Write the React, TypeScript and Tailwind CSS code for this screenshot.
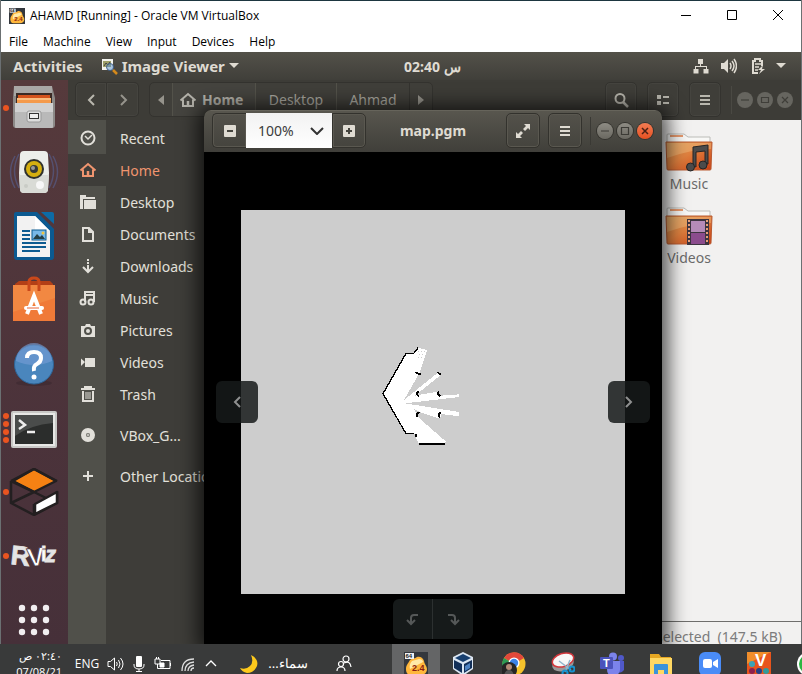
import React from "react";

const ui = "font-['Noto_Sans','Open_Sans',sans-serif]";
const win = "font-['Open_Sans','Noto_Sans',sans-serif]";
const toolBtn =
  "flex h-[35px] w-8 shrink-0 items-center justify-center rounded-[5px] border border-[#34332f] bg-[#3f3e39] shadow-[inset_0_0_0_1px_#45443f] text-[#b9b7ae]";
const viewerBtn =
  "flex h-[35px] w-[34px] shrink-0 items-center justify-center rounded-[5px] border border-[#33322d] bg-gradient-to-b from-[#53514a] to-[#45443e] shadow-[inset_0_0_0_1px_#5a5850] text-[#dfdbd2]";

function Hamburger() {
  return (
    <svg width="16" height="16" viewBox="0 0 16 16" fill="currentColor">
      <path d="M3 3h10v2H3zM3 7h10v2H3zM3 11h10v2H3z" />
    </svg>
  );
}

function HomeIcon() {
  return (
    <svg width="18" height="18" viewBox="0 0 18 18" fill="none" stroke="currentColor" strokeWidth="2">
      <path d="M1.500 9.500 9 3l7.500 6.500M4 8.500V15h10V8.500" />
      <path d="M9 10v5" strokeWidth="2.500" />
    </svg>
  );
}

/* ---------- host window ---------- */

function EmulatorIcon({ size }: { size: number }) {
  return (
    <svg width={size} height={size} viewBox="0 0 24 24">
      <rect width="24" height="24" fill="#33373d" />
      <path d="M6 8c2-2 5-1 7-3 2-1 6 0 7 4 0 3 3 5 3 8 0 4-3 6-7 6H7c-4 0-5-3-5-6 0-4 2-5 4-9z" fill="#ffb73c" />
      <path d="M8 9c2-1 5-1 7-2 2 0 4 1 4 3L6 17c-1-3 0-6 2-8z" fill="#ffe9a8" />
      <rect x="1" y="1" width="9" height="6" fill="#eef1f4" />
      <text x="1.500" y="6" fontSize="6" fontWeight="700" fill="#222" fontFamily="Liberation Sans">64</text>
      <text x="8" y="19" fontSize="9" fontWeight="700" fill="#8b1d10" fontFamily="Liberation Sans">2.4</text>
    </svg>
  );
}

function TitleBar() {
  return (
    <header className="flex h-[31px] shrink-0 items-center border-t border-[#1d3640] bg-white pl-2 text-black">
      <EmulatorIcon size={16} />
      <h1 className="ml-[5px] flex-1 text-[12px] whitespace-nowrap">AHAMD [Running] - Oracle VM VirtualBox</h1>
      <button aria-label="Minimize" className="flex h-full w-[46px] items-center justify-center">
        <svg width="12" height="12" viewBox="0 0 12 12"><path d="M1 5.500h10" stroke="#000" /></svg>
      </button>
      <button aria-label="Maximize" className="flex h-full w-[46px] items-center justify-center">
        <svg width="12" height="12" viewBox="0 0 12 12"><path d="M1.500 0.500h9v9h-9z" fill="none" stroke="#000" /></svg>
      </button>
      <button aria-label="Close" className="flex h-full w-[46px] items-center justify-center">
        <svg width="12" height="12" viewBox="0 0 12 12"><path d="m1 0 10 10M11 0 1 10" stroke="#000" /></svg>
      </button>
    </header>
  );
}

function MenuBar() {
  return (
    <nav className="flex h-[21px] shrink-0 items-center gap-[15px] bg-white pl-2 text-[12px] text-black">
      {["File", "Machine", "View", "Input", "Devices", "Help"].map((m) => (
        <button key={m}>{m}</button>
      ))}
    </nav>
  );
}

/* ---------- guest desktop ---------- */

function TopPanel() {
  return (
    <div className="flex h-7 shrink-0 items-center bg-gradient-to-b from-[#535149] to-[#403f3a] font-bold text-[#dfdbd2]">
      <div className="flex w-1/2 items-center pl-3 text-[15px]">
        <button>Activities</button>
        <button className="ml-[18px] flex items-center">
          <svg width="17" height="17" viewBox="0 0 17 17" className="mr-1">
            <rect x="1" y="1" width="11" height="11" fill="#f3f3ee" />
            <rect x="2" y="3" width="8" height="6" fill="#9d9f69" />
            <path d="m3 8 2-3 2 2 2-3" stroke="#444" fill="none" />
            <circle cx="9" cy="9" r="3.500" fill="#4f8fd0" fillOpacity=".45" stroke="#46638a" />
            <path d="m12 12 4 4" stroke="#d58a1c" strokeWidth="2.500" />
          </svg>
          Image Viewer
          <svg width="10" height="6" viewBox="0 0 10 6" className="ml-1" fill="currentColor"><path d="M0 0h10L5 5z" /></svg>
        </button>
      </div>
      <time dir="ltr" className="pl-[3px] text-[14px] whitespace-nowrap">02:40 {"\u200e"}س</time>
      <div className="flex flex-1 items-center justify-end pr-[15px]">
        <svg width="16" height="16" viewBox="0 0 16 16" fill="currentColor">
          <path d="M5 1h5v5H8v2h6v3h1.500v4.500h-5V11H13V9H3v2h2.500v4.500h-5V11H2V8h5V6H5z" />
        </svg>
        <svg width="16" height="16" viewBox="0 0 16 16" className="ml-3" fill="currentColor">
          <path d="M0 5h3l4-4v14l-4-4H0z" />
          <path d="M9 5q2 3 0 6M11 3q4 5 0 10M13 1q5 7 0 14" fill="none" stroke="currentColor" strokeWidth="1.500" />
        </svg>
        <svg width="15" height="16" viewBox="0 0 15 16" className="ml-[14px]" fill="none" stroke="currentColor" strokeWidth="2">
          <path d="M7 15H2V3h2V1h5v2h2v5" />
          <path d="M4 6h6M4 9h4M4 12h3" strokeWidth="1.500" />
          <path d="m12 7-5 5h3l-2 4 6-5h-3z" fill="currentColor" stroke="none" />
        </svg>
        <svg width="10" height="6" viewBox="0 0 10 6" className="ml-[10px]" fill="currentColor"><path d="M0 0h10L5 5z" /></svg>
      </div>
    </div>
  );
}

const dock: { name: string; dots: number; art: React.ReactNode }[] = [
  {
    name: "Files", dots: 1,
    art: (
      <>
        <path d="M4 2h38l3 12v27q0 3-3 3H6q-3 0-3-3V14z" fill="#8c8a88" />
        <path d="M4 2h38v10H4z" fill="#a9a7a5" />
        <path d="M6 9h36v12H6z" fill="#3b2a25" />
        <path d="M8 11h32v10H8z" fill="#d4531d" /><path d="M7 14h34v7H7z" fill="#f49a4b" />
        <path d="M7 15h34" stroke="#ffe0b5" />
        <path d="M5 19h38v24q0 1-1 1H6q-1 0-1-1z" fill="#b9b9b9" /><path d="M5 19h38v9H5z" fill="#d1d1d1" />
        <rect x="17" y="27" width="14" height="11" rx="2" fill="#ddd" stroke="#999" />
        <rect x="19.500" y="29.500" width="9" height="5" fill="#eee" stroke="#333" />
      </>
    ),
  },
  {
    name: "Rhythmbox", dots: 0,
    art: (
      <>
        <path d="M5 8q-9 16 0 32M9 6q-9 17 0 34M43 8q9 16 0 32M39 6q9 17 0 34" fill="none" stroke="#55506f" strokeWidth="1.500" />
        <path d="M14 3h20q4 0 4 4l1 18-1 16q0 4-4 4H14q-4 0-4-4L9 25l1-18q0-4 4-4z" fill="#eceeea" />
        <path d="M9 27h30l-1 14q0 4-4 4H14q-4 0-4-4z" fill="#d9dbd6" />
        <circle cx="24" cy="21" r="10" fill="#2f312d" /><circle cx="24" cy="21" r="8" fill="#d5af10" />
        <circle cx="24" cy="21" r="4" fill="#373a38" /><circle cx="23" cy="20" r="2" fill="#999" />
        <ellipse cx="30" cy="37" rx="4" ry="4" fill="#f7f7f7" /><circle cx="16" cy="38" r="2" fill="#c9cbc6" />
      </>
    ),
  },
  {
    name: "LibreOffice Writer", dots: 0,
    art: (
      <>
        <path d="M6 0h21l17 17v28q0 3-3 3H7q-3 0-3-3V2q0-2 2-2z" fill="#0b5a91" />
        <path d="M31 0h11q2 0 2 2v10z" fill="#0d6ba6" />
        <path d="M7 4h18l15 15v26H7z" fill="#f2f2f2" /><path d="M25 4l15 15H25z" fill="#fff" />
        <path d="M12 19h8M12 23h8M12 27h8M12 31h24M12 35h24M12 39h18" stroke="#0d5c91" strokeWidth="2" />
        <rect x="22" y="18" width="14" height="10" fill="#77b8e8" stroke="#0d5c91" />
        <path d="m23 27 4-5 3 3 2-2 3 4z" fill="#243f45" /><circle cx="33" cy="21" r="1.500" fill="#f0c541" />
      </>
    ),
  },
  {
    name: "Ubuntu Software", dots: 0,
    art: (
      <>
        <path d="M5 8l4-3h31l3 3v5H5z" fill="#b33f16" />
        <path d="M3 9h42v36H3z" fill="#f07a38" /><path d="M3 9h42v13L3 36z" fill="#f39149" fillOpacity=".6" />
        <path d="M19 15V6q0-4 5-4t5 4v9" fill="none" stroke="#c9481a" strokeWidth="3" />
        <path d="M17 38 24 20l7 18" fill="none" stroke="#fff" strokeWidth="4" />
        <path d="M16 32h16" stroke="#fff" strokeWidth="4" strokeLinecap="round" /><path d="M17 32h12" stroke="#eb6536" />
      </>
    ),
  },
  {
    name: "Help", dots: 0,
    art: (
      <>
        <ellipse cx="24" cy="43" rx="18" ry="3" fill="#2b1d24" fillOpacity=".3" />
        <circle cx="24" cy="24.500" r="19.500" fill="#4a86bd" stroke="#2d6598" />
        <path d="M6 21a18 18 0 0 1 36 0q-18 8-36 0z" fill="#789ed5" fillOpacity=".6" />
        <path d="M17 18q0-6 7-6t7 6q0 4-4 6t-3 7" fill="none" stroke="#fff" strokeWidth="4" />
        <circle cx="24" cy="37" r="2.500" fill="#fff" />
      </>
    ),
  },
  {
    name: "Terminal", dots: 4,
    art: (
      <>
        <rect x="1" y="7" width="46" height="37" rx="2" fill="#c9c9c7" />
        <rect x="3" y="9" width="42" height="33" fill="#e8e8e6" />
        <rect x="5" y="11" width="38" height="29" fill="#2b2d2c" />
        <path d="M5 11h38v8Q20 21 5 32z" fill="#4a4c4b" />
        <path d="m9 16 6 5-6 4M17 28h8" fill="none" stroke="#eee" strokeWidth="2.500" />
      </>
    ),
  },
  {
    name: "Gazebo", dots: 1,
    art: (
      <g stroke="#231f20" strokeWidth="2.500" strokeLinejoin="round">
        <path d="M24 1 46 13 24 24 3 13z" fill="#f58113" />
        <path d="M1 13 24 1l23 12M1 13v22l23 12 23-12V23M1 13l23 11M1 35l23-11 12 6M24 47V36" fill="none" />
        <path d="m25 36 22-12v11L25 46z" fill="#fff" />
      </g>
    ),
  },
  {
    name: "RViz", dots: 1,
    art: (
      <g fontFamily="Liberation Sans" fontWeight="700" fill="#e4e4e4" stroke="#e4e4e4" strokeWidth=".8">
        <text x="1" y="33" fontSize="27" transform="rotate(6 10 24)">R</text>
        <text x="17" y="34" fontSize="26" transform="rotate(-6 24 24)" fill="#fff" stroke="#4a333c">V</text>
        <text x="31" y="29" fontSize="20" fill="#fff">i</text>
        <text x="35" y="30" fontSize="22" fontStyle="italic">z</text>
      </g>
    ),
  },
  {
    name: "Show Applications", dots: 0,
    art: <>{[12, 24, 36].map((y) => [12, 24, 36].map((x) => <circle key={`${x}-${y}`} cx={x} cy={y} r="3.200" fill="#f1eef0" />))}</>,
  },
];

function Dock() {
  return (
    <aside className="flex w-[67px] shrink-0 flex-col gap-2 overflow-hidden bg-gradient-to-b from-[#563a3c] via-[#4d343b] to-[#463039]">
      {dock.map((d) => (
        <button key={d.name} aria-label={d.name} className="flex h-14 shrink-0 items-center">
          <span className="flex w-2 flex-col items-end gap-[2px]">
            {Array.from({ length: d.dots }, (_, i) => (
              <span key={i} className="size-[6px] rounded-full bg-[#ea5420]" />
            ))}
          </span>
          <svg width="50" height="48" viewBox="-1 0 50 48">{d.art}</svg>
        </button>
      ))}
    </aside>
  );
}

const places: { label: string; icon: React.ReactNode; gap?: boolean }[] = [
  { label: "Recent", icon: <><circle cx="9" cy="9" r="6.500" /><path d="m6 7 3 3 4-4" strokeWidth="1.500" /></> },
  { label: "Home", icon: null },
  { label: "Desktop", icon: <><path d="M1 2h6v2h9v2H4v10H1z" fill="currentColor" stroke="none" /><path d="M5 7h12v9H5z" fill="currentColor" stroke="none" /></> },
  { label: "Documents", icon: <path d="M4 3h6l4 4v9H4zM10 3v4h4" /> },
  { label: "Downloads", icon: <path d="M9 2v2M9 5v2M9 8v6M4 10l5 5 5-5" /> },
  { label: "Music", icon: <><circle cx="4" cy="13" r="2.500" /><circle cx="12" cy="13" r="2.500" /><path d="M6 13V3h9v10M6 6h9" /></> },
  { label: "Pictures", icon: <><path d="M2 5h4l1-2h4l1 2h4v11H2z" fill="currentColor" stroke="none" /><circle cx="9" cy="10" r="3" stroke="#50504a" /></> },
  { label: "Videos", icon: <path d="M2 5.500 6 9l-4 4zM6 5h10v9H6z" fill="currentColor" stroke="none" /> },
  { label: "Trash", icon: <><path d="M2 4h14M6 4V2h6v2M4 6v10h10V6" /><path d="M7 7v7M9 7v7M11 7v7" strokeWidth="1" /></> },
  { label: "VBox_G...", gap: true, icon: <><circle cx="9" cy="9" r="4.500" strokeWidth="5" /><circle cx="9" cy="9" r="1" strokeWidth="1" /></> },
  { label: "Other Locations", gap: true, icon: <path d="M9 4v10M4 9h10" /> },
];

function Sidebar() {
  return (
    <nav className="flex w-[190px] shrink-0 flex-col bg-[linear-gradient(to_right,#50504a_38px,#3e3d39_38px)] pt-[2px]">
      {places.map((p) => (
        <a
          key={p.label}
          href="#"
          className={`flex h-8 shrink-0 items-center text-[14px] ${p.gap ? "mt-[9px]" : ""} ${p.label === "Home" ? "bg-[#3e3d39] text-[#f0956f]" : "text-[#e2e0da]"}`}
        >
          <span className="flex w-10 shrink-0 items-center justify-center">
            {p.icon ? (
              <svg width="18" height="18" viewBox="0 0 18 18" fill="none" stroke="currentColor" strokeWidth="2">{p.icon}</svg>
            ) : (
              <HomeIcon />
            )}
          </span>
          <span className="pl-3 whitespace-nowrap">{p.label}</span>
        </a>
      ))}
    </nav>
  );
}

function Folder({ kind }: { kind: string }) {
  return (
    <button className="flex h-[74px] w-24 flex-col items-center text-[14px] leading-5 text-[#6a6a6a]">
      <svg width="48" height="42" viewBox="0 -1 48 42">
        <defs>
          <linearGradient id={`f${kind}`} x1="0" y1="0" x2="1" y2="1">
            <stop offset="0" stopColor="#d99b58" /><stop offset=".45" stopColor="#e0813f" /><stop offset="1" stopColor="#c93d12" />
          </linearGradient>
        </defs>
        <path d="M2 10V2q0-1 1-1h16l4 3h22v8z" fill="#f8f8f6" stroke="#bcbcb8" />
        <path d="M5 3h13" stroke="#e79a6e" strokeWidth="2" />
        <path d="M1 9h46l-1 27q0 1-1 1H3q-1 0-1-1z" fill={`url(#f${kind})`} stroke="#b95c33" />
        <path d="M2 10h44v6Q28 16 2 25z" fill="#f6ce93" fillOpacity=".35" />
        {kind === "Music" ? (
          <g fill="#4b4b4b" stroke="#252525">
            <path d="M28 33V14l15-2v19h-3V18l-9 1v15z" />
            <circle cx="25.500" cy="34" r="4" /><circle cx="38" cy="32" r="4" />
          </g>
        ) : (
          <>
            <path d="M22 12h22v26H22z" fill="#3d3540" />
            <path d="M26 14h14v11H26z" fill="#b58bb8" /><path d="M26 26h14v11H26z" fill="#8b4c8d" />
            <path d="M24 13v24M42 13v24" stroke="#e8a07a" strokeWidth="2" strokeDasharray="2 2" />
          </>
        )}
      </svg>
      {kind}
    </button>
  );
}

function FileManager() {
  return (
    <section className="flex min-w-0 flex-1 flex-col bg-[#f2f1f0]">
      <div className="flex h-10 shrink-0 items-center bg-[#3d3c37] pr-2 pb-px pl-[7px] text-[14px] text-[#a9a79f]">
        <button aria-label="Back" className={`${toolBtn} rounded-r-none`}>
          <svg width="16" height="16" viewBox="0 0 16 16" fill="none" stroke="currentColor" strokeWidth="2"><path d="m11 3-5 5 5 5" /></svg>
        </button>
        <button aria-label="Forward" className={`${toolBtn} rounded-l-none border-l-0`}>
          <svg width="16" height="16" viewBox="0 0 16 16" fill="none" stroke="#96948c" strokeWidth="2"><path d="m6 3 5 5-5 5" /></svg>
        </button>
        <div className="ml-[10px] flex h-[35px] items-stretch rounded-[5px] border border-[#34332f] bg-[#403f3a]">
          <button aria-label="Scroll path left" className="flex w-[22px] items-center justify-center">
            <svg width="6" height="10" viewBox="0 0 6 10" fill="#96948c"><path d="M6 0v10L0 5z" /></svg>
          </button>
          <button className="flex w-[84px] items-center gap-[5px] border-x border-[#53524a] bg-[#45443f] pl-[6px] font-bold text-[#b4b2aa]">
            <HomeIcon />Home
          </button>
          <button className="w-[81px] border-r border-[#53524a]">Desktop</button>
          <button className="w-[73px] border-r border-[#34332f]">Ahmad</button>
          <button aria-label="Scroll path right" className="flex w-[22px] items-center justify-center">
            <svg width="6" height="10" viewBox="0 0 6 10" fill="#96948c"><path d="M0 0v10l6-5z" /></svg>
          </button>
        </div>
        <div className="flex-1" />
        <div className="flex items-center gap-[10px]">
          <button aria-label="Search" className={toolBtn}>
            <svg width="16" height="16" viewBox="0 0 16 16" fill="none" stroke="currentColor" strokeWidth="2"><circle cx="7" cy="6.500" r="4.500" /><path d="m10 10 5 5" strokeWidth="2.500" /></svg>
          </button>
          <button aria-label="List view" className={toolBtn}>
            <svg width="16" height="16" viewBox="0 0 16 16" fill="currentColor"><path d="M2 3h4v4H2zM2 9h4v4H2zM8 4h6v2H8zM8 10h6v2H8z" /></svg>
          </button>
          <button aria-label="Menu" className={toolBtn}><Hamburger /></button>
        </div>
        <span className="ml-[10px] h-7 w-px bg-[#4a4943]" />
        <div className="ml-[5px] flex gap-1">
          {["M4 8h8", "M4.500 5.500h7v5h-7z", "m5 5 6 6M11 5l-6 6"].map((d, i) => (
            <button key={d} aria-label={["Minimize", "Maximize", "Close"][i]} className="size-4 rounded-full bg-[#66655f]">
              <svg width="16" height="16" viewBox="0 0 16 16" fill="none" stroke="#3f3e39" strokeWidth="1.200"><path d={d} /></svg>
            </button>
          ))}
        </div>
      </div>
      <div className="flex min-h-0 flex-1">
        <Sidebar />
        <div className="flex min-w-0 flex-1 flex-col">
          <div className="flex flex-1 flex-col items-end pt-3 pr-16">
            <Folder kind="Music" />
            <Folder kind="Videos" />
          </div>
          <div className="flex h-[23px] justify-end border-t border-[#6f6e6c] pt-[5px] pr-[19px] text-[14px] leading-5 whitespace-nowrap text-[#7c7c7c]">
            “map.pgm” selected&nbsp; (147.5 kB)
          </div>
        </div>
      </div>
    </section>
  );
}

function MapImage() {
  return (
    <svg viewBox="0 0 384 384" className="aspect-square w-full" shapeRendering="crispEdges" role="img" aria-label="map.pgm">
      <rect width="384" height="384" fill="#cdcdcd" />
      <g transform="translate(129 125) scale(.33333)">
        <path
          fill="#fff"
          d="M40 176 108 55H135L143 38 172 45 148 115 102 195 205 112 212 120 135 182 202 170 212 182 267 178V186L105 205 267 231V244L212 237V247L200 248 147 230 132 222 145 247 228 320 222 327H147L133 297H108Z"
        />
        <path fill="none" stroke="#cdcdcd" strokeWidth="3" strokeDasharray="3 6" d="M144 50h22M147 59h16M144 68h15" />
        <g fill="none" stroke="#000" strokeWidth="4">
          <path d="M133 55H108L39 176 108 296H132M133 53l9-12V36M147 327h78M138 297v10" />
          <path d="M139 111q3 6 13 6M204 111q2 6 8 8M145 169q-7 8 1 15M206 169q-4 8 4 15M149 232q-13 3-6 14M212 232q-9 4-3 16" strokeWidth="6" />
        </g>
      </g>
    </svg>
  );
}

function ImageViewer() {
  return (
    <section className="absolute top-[58px] right-[139px] bottom-0 left-[203px] flex flex-col overflow-hidden rounded-t-[7px] bg-black shadow-[0_2px_20px_6px_rgba(0,0,0,0.7)]">
      <div className="grid h-[42px] shrink-0 grid-cols-[1fr_auto_1fr] items-center border-t border-[#66645b] bg-gradient-to-b from-[#58564e] to-[#403f3a] pb-[2px] text-[14px] text-[#dfdbd2]">
        <div className="flex pl-2">
          <button aria-label="Zoom out" className={`${viewerBtn} w-[33px] rounded-r-none border-r-0`}>
            <svg width="12" height="12" viewBox="0 0 12 12"><rect width="12" height="12" rx="1" fill="#dfdbd2" /><path d="M3 6h6" stroke="#45443e" strokeWidth="2" /></svg>
          </button>
          <label className="relative flex h-[35px] w-[86px] bg-gradient-to-b from-[#f2f2f2] to-white text-[#3c3c3c]">
            <select aria-label="Zoom level" className="w-full appearance-none bg-transparent pl-3 outline-none">
              <option>100%</option>
            </select>
            <svg width="14" height="8" viewBox="0 0 14 8" className="pointer-events-none absolute top-[14px] right-2" fill="none" stroke="#333" strokeWidth="2"><path d="m1 1 6 6 6-6" /></svg>
          </label>
          <button aria-label="Zoom in" className={`${viewerBtn} rounded-l-none`}>
            <svg width="12" height="12" viewBox="0 0 12 12"><rect width="12" height="12" rx="1" fill="#dfdbd2" /><path d="M3 6h6M6 3v6" stroke="#45443e" strokeWidth="2" /></svg>
          </button>
        </div>
        <h2 className="font-bold">map.pgm</h2>
        <div className="flex items-center justify-end pr-[9px]">
          <button aria-label="Fullscreen" className={viewerBtn}>
            <svg width="16" height="16" viewBox="0 0 16 16" fill="currentColor">
              <path d="M9 1h6v6l-2-2-3 3-2-2 3-3zM7 15H1V9l2 2 3-3 2 2-3 3z" />
            </svg>
          </button>
          <button aria-label="Menu" className={`${viewerBtn} ml-2`}><Hamburger /></button>
          <span className="ml-2 h-7 w-px bg-[#3a3934]" />
          <div className="ml-[6px] flex gap-1">
            {["M4 8h8", "M4.500 4.500h7v7h-7z"].map((d, i) => (
              <button key={d} aria-label={["Minimize", "Maximize"][i]} className="size-4 rounded-full bg-gradient-to-b from-[#8e8c84] to-[#6a6861] shadow-[0_0_0_1px_#34332e]">
                <svg width="16" height="16" viewBox="0 0 16 16" fill="none" stroke="#3c3b36" strokeWidth="1.200"><path d={d} /></svg>
              </button>
            ))}
            <button aria-label="Close" className="size-4 rounded-full bg-gradient-to-b from-[#f27b52] to-[#e5501f] shadow-[0_0_0_1px_#34332e]">
              <svg width="16" height="16" viewBox="0 0 16 16" fill="none" stroke="#4a2014" strokeWidth="1.500"><path d="m5 5 6 6M11 5l-6 6" /></svg>
            </button>
          </div>
        </div>
      </div>
      <div className="relative flex-1 px-[37px] pt-[58px]">
        <MapImage />
        <button aria-label="Previous image" className="absolute top-[229px] left-3 flex size-[42px] items-center justify-center rounded-[6px] bg-[#161a1a]/85">
          <svg width="16" height="16" viewBox="0 0 16 16" fill="none" stroke="#8f9090" strokeWidth="2"><path d="m11 3-5 5 5 5" /></svg>
        </button>
        <button aria-label="Next image" className="absolute top-[229px] right-3 flex size-[42px] items-center justify-center rounded-[6px] bg-[#161a1a]/85">
          <svg width="16" height="16" viewBox="0 0 16 16" fill="none" stroke="#8f9090" strokeWidth="2"><path d="m5 3 5 5-5 5" /></svg>
        </button>
        <div className="absolute inset-x-0 bottom-[5px] flex justify-center">
          <button aria-label="Rotate left" className="flex h-10 w-10 items-center justify-center rounded-l-[6px] border-r border-[#2c3030] bg-[#161a1a]">
            <svg width="16" height="16" viewBox="0 0 16 16" fill="none" stroke="#555858" strokeWidth="2"><path d="M13 4H9Q6 4 6 7v6M2 9l4 4 4-4" /></svg>
          </button>
          <button aria-label="Rotate right" className="flex h-10 w-10 items-center justify-center rounded-r-[6px] bg-[#161a1a]">
            <svg width="16" height="16" viewBox="0 0 16 16" fill="none" stroke="#555858" strokeWidth="2"><path d="M3 4h4q3 0 3 3v6M6 9l4 4 4-4" /></svg>
          </button>
        </div>
      </div>
    </section>
  );
}

/* ---------- host taskbar ---------- */

const apps: { name: string; art: React.ReactNode }[] = [
  { name: "VirtualBox", art: <><path d="m10 0 10 5v12l-10 7-10-7V5z" fill="#dbe6f2" /><path d="m10 2 8 4-8 4-8-4z" fill="#173f70" /><path d="m1 8 8 4v9l-8-5zM19 8l-8 4v9l8-5z" fill="#122f58" /><path d="m12 14 5-3v5l-5 3z" fill="#4e83c2" /></> },
  { name: "Chrome", art: <><circle cx="12" cy="12" r="11.500" fill="#f6c32c" /><path d="M12 12 2 6a11.500 11.500 0 0 1 20 0z" fill="#e1483b" /><path d="M12 12 2 6a11.500 11.500 0 0 0 5 17z" fill="#2d9b55" /><circle cx="12" cy="11" r="5.500" fill="#fff" /><circle cx="12" cy="11" r="4.200" fill="#3c83e8" /><circle cx="7" cy="18" r="8" fill="#252525" /><circle cx="7" cy="15" r="3" fill="#b58b77" /><path d="M2 24q1-6 5-6t5 6z" fill="#555" /></> },
  { name: "Snipping Tool", art: <><ellipse cx="12" cy="12" rx="11" ry="7" transform="rotate(-18 12 12)" fill="#999" /><ellipse cx="12" cy="8" rx="11" ry="6.500" transform="rotate(-18 12 8)" fill="#f7f7f7" stroke="#d3383d" strokeWidth="1.500" /><path d="m8 9 12 9M19 8l-5 12" stroke="#8fb5cc" strokeWidth="1.500" /><circle cx="14" cy="21" r="2.500" fill="none" stroke="#1692d0" strokeWidth="2" /><circle cx="21" cy="17" r="2.500" fill="none" stroke="#1692d0" strokeWidth="2" /></> },
  { name: "Teams", art: <><circle cx="21" cy="6" r="3" fill="#5059c9" /><path d="M16 9h8v9q-4 5-8 1z" fill="#5059c9" /><circle cx="13" cy="4.500" r="4" fill="#7b83eb" /><path d="M8 9h12v9q-1 6-7 6t-6-7z" fill="#7b83eb" /><rect x="0" y="5" width="13" height="12" rx="1" fill="#4b53bc" /><text x="3" y="15" fontSize="11" fontWeight="700" fill="#fff" fontFamily="Liberation Sans">T</text></> },
  { name: "File Explorer", art: <><path d="M1 2h9l2 3h10v18H1z" fill="#e6a722" /><path d="M1 6h22v17H1z" fill="#ffd863" /><path d="M5 13q0-1 1-1h12q1 0 1 1v10h-4v-5H9v5H5z" fill="#3b93d9" /></> },
  { name: "Zoom", art: <><rect x="1" y="0" width="22" height="24" rx="6" fill="#4a8cf7" /><rect x="5" y="7" width="9" height="9" rx="2" fill="#fff" /><path d="m15 10 5-3v9l-5-3z" fill="#fff" /></> },
  { name: "VClient", art: <><rect width="24" height="24" fill="#e8541c" /><path d="M0 0h24L0 12z" fill="#f18e2b" /><text x="8" y="14" fontSize="17" fontWeight="700" fill="#fff" fontFamily="Liberation Sans">V</text><circle cx="5" cy="12" r="3" fill="#3ba3b8" /><circle cx="5" cy="19" r="3" fill="#8f1f4d" /><circle cx="12" cy="19" r="3" fill="#253f86" /><circle cx="19" cy="19" r="3" fill="#329a9a" /></> },
  { name: "WhatsApp", art: <><circle cx="13" cy="12" r="12" fill="#fff" /><circle cx="13" cy="12" r="10" fill="#2bb742" /></> },
];

function Taskbar() {
  return (
    <footer className="flex h-[30px] shrink-0 overflow-hidden bg-[#393a3a] text-white">
      <div className="flex h-10 w-[392px] shrink-0 items-center">
        <button className="flex w-[68px] flex-col items-end pr-[6px] text-[11px] leading-4">
          <span dir="rtl" lang="ar" className={ui}>٠٢:٤٠ ص</span>
          <span>07/08/21</span>
        </button>
        <button className="w-8 pl-[6px] text-[12px]">ENG</button>
        <div className="flex w-[128px] items-center gap-2 pl-[7px]">
          <svg width="17" height="16" viewBox="0 0 17 16" fill="none" stroke="#fff"><path d="M1 5.500h2.500L7.500 2v12l-4-3.500H1zM9.500 6q1.500 2 0 4M11.500 4q3 4 0 8M13.500 2q5 6 0 12" /></svg>
          <svg width="14" height="16" viewBox="0 0 14 16"><rect x="4" y="0" width="6" height="11" rx="1" fill="#fff" /><path d="M2 8v1q0 4 5 4t5-4V8M7 13v3M4 15.500h6" fill="none" stroke="#fff" /></svg>
          <svg width="18" height="16" viewBox="0 0 18 16" fill="none" stroke="#fff"><path d="M7 4.500h9v8H5M16.500 7v3M1 3v5h5V3zM2.500 1v2M4.500 1v2M3.500 8v4.500H5" /><path d="M6 7h4v4H6z" fill="#fff" /></svg>
          <svg width="16" height="16" viewBox="0 0 16 16" fill="none" stroke="#ddd"><path d="M2 15Q2 3 14 3M5 15q0-8 9-9M8 15q0-5 6-6M11 15q0-3 3-3" strokeWidth="1.300" /></svg>
          <svg width="14" height="16" viewBox="0 0 14 16" fill="none" stroke="#fff" strokeWidth="1.300"><path d="m2 10 5-5 5 5" /></svg>
        </div>
        <button className="flex items-center gap-2 pl-[11px] text-[13px]">
          <svg width="20" height="20" viewBox="0 0 20 20"><path d="M12 1q8 4 6 11-3 7-10 7-5-1-7-5 6 2 10-2t1-11z" fill="#fdc91c" /></svg>
          <span dir="ltr" lang="ar" className={`w-[42px] whitespace-nowrap ${ui}`}>...سماء</span>
        </button>
        <button aria-label="People" className="ml-[26px]">
          <svg width="18" height="18" viewBox="0 0 18 18" fill="none" stroke="#fff" strokeWidth="1.200"><circle cx="11" cy="4" r="3" /><circle cx="6" cy="9" r="2.500" /><path d="M2 16q0-4 4-4t4 4M9 8q6-3 7 4" /></svg>
        </button>
      </div>
      <div className="flex h-10 gap-px">
        <button aria-label="Emulator" className="flex w-12 shrink-0 items-center justify-center bg-[#646566]"><EmulatorIcon size={24} /></button>
        {apps.map((a) => (
          <button key={a.name} aria-label={a.name} className="flex w-12 shrink-0 items-center justify-center">
            <svg width="24" height="24" viewBox="0 0 24 24">{a.art}</svg>
          </button>
        ))}
      </div>
    </footer>
  );
}

export default function App() {
  return (
    <div className={`flex h-screen w-full flex-col overflow-hidden bg-[#3d3c37] ${win}`}>
      <div className="flex min-h-0 flex-1 flex-col border-x border-[#6b7072]">
        <TitleBar />
        <MenuBar />
        <main className={`relative flex min-h-0 flex-1 flex-col overflow-hidden ${ui}`}>
          <TopPanel />
          <div className="flex min-h-0 flex-1">
            <Dock />
            <FileManager />
          </div>
          <ImageViewer />
        </main>
      </div>
      <Taskbar />
    </div>
  );
}
